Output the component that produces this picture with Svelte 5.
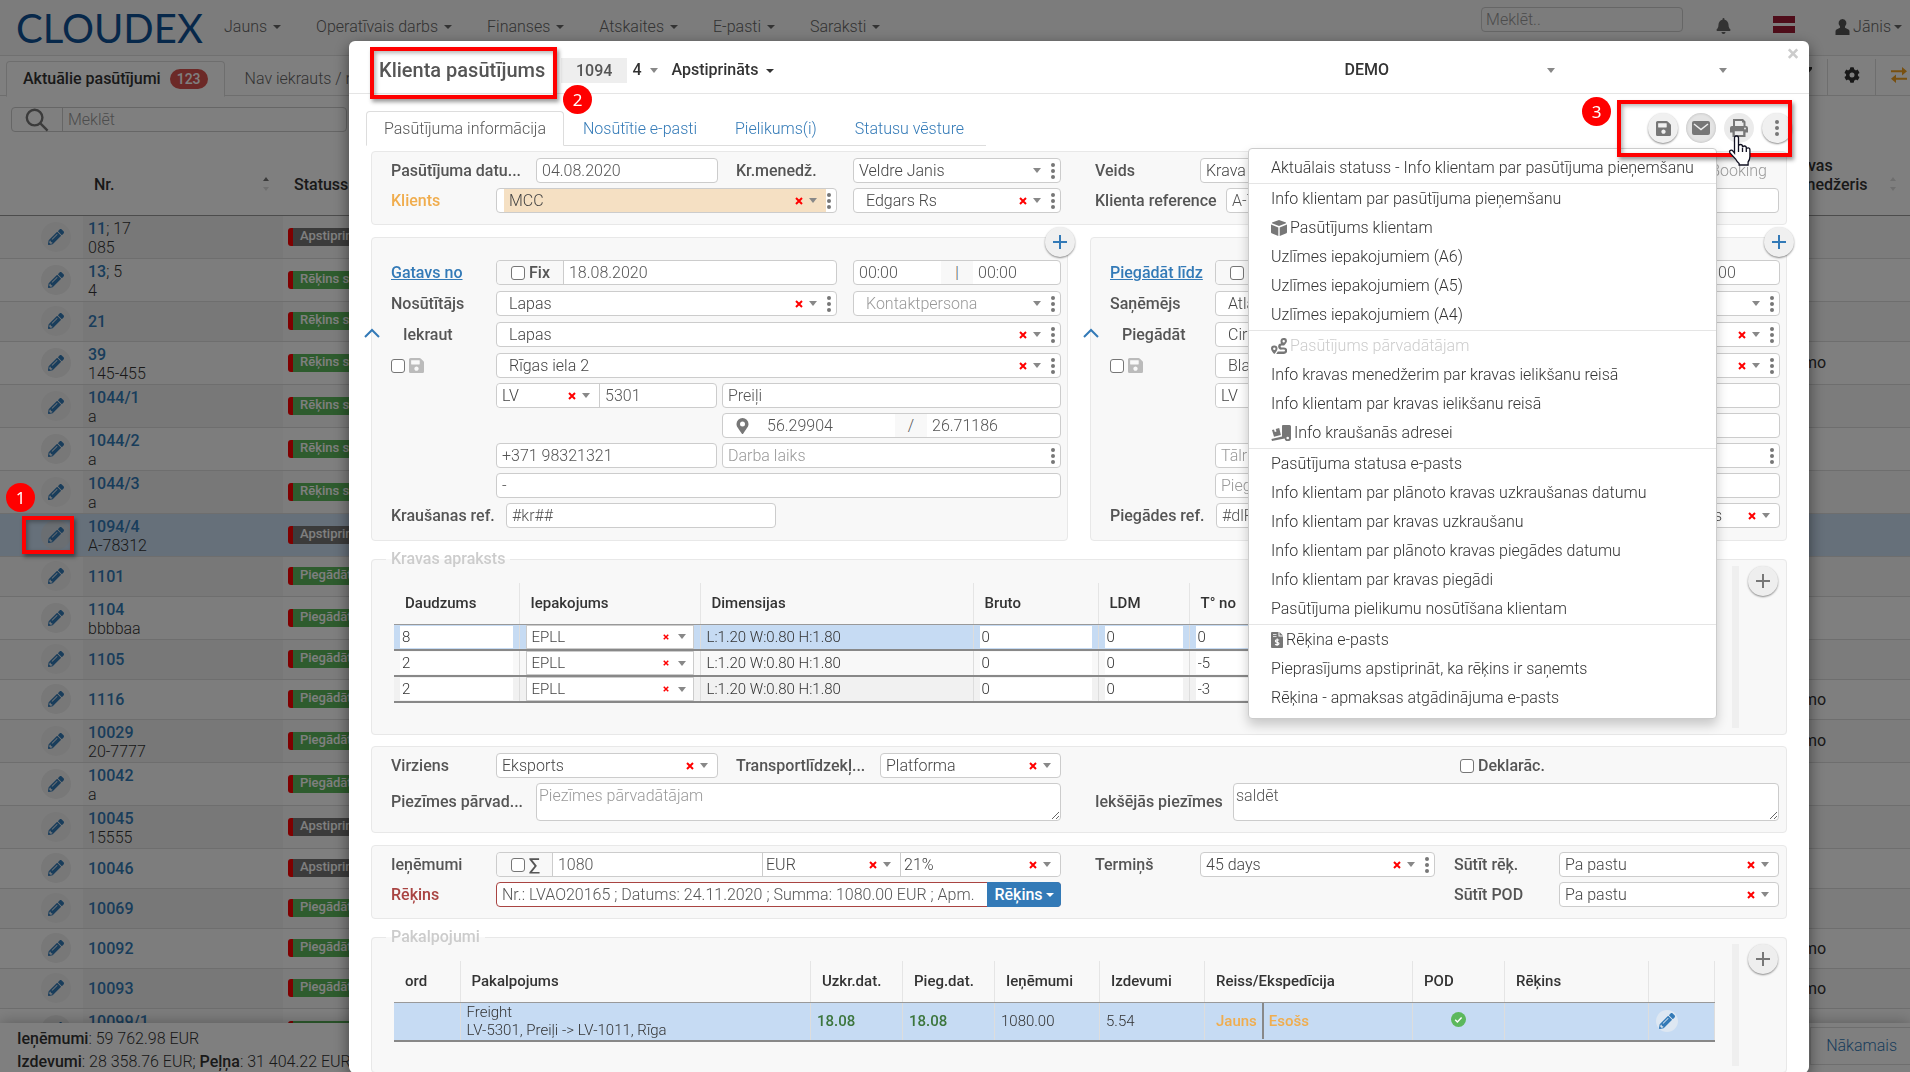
<script>
	const nav = ['Jauns', 'Operatīvais darbs', 'Finanses', 'Atskaites', 'E-pasti', 'Saraksti'];

	const orders = [
		{ nr: '11', extra: '; 17', ref: '085', status: 'Apstiprināts' },
		{ nr: '13', extra: '; 5', ref: '4', status: 'Rēķins saņemts' },
		{ nr: '21', status: 'Rēķins saņemts' },
		{ nr: '39', ref: '145-455', status: 'Rēķins saņemts', manager: 'Demo' },
		{ nr: '1044/1', ref: 'a', status: 'Rēķins saņemts' },
		{ nr: '1044/2', ref: 'a', status: 'Rēķins saņemts' },
		{ nr: '1044/3', ref: 'a', status: 'Rēķins saņemts' },
		{ nr: '1094/4', ref: 'A-78312', status: 'Apstiprināts', selected: true },
		{ nr: '1101', status: 'Piegādāts' },
		{ nr: '1104', ref: 'bbbbaa', status: 'Piegādāts' },
		{ nr: '1105', status: 'Piegādāts' },
		{ nr: '1116', status: 'Piegādāts', manager: 'Demo' },
		{ nr: '10029', ref: '20-7777', status: 'Piegādāts', manager: 'Demo' },
		{ nr: '10042', ref: 'a', status: 'Piegādāts' },
		{ nr: '10045', ref: '15555', status: 'Apstiprināts' },
		{ nr: '10046', status: 'Apstiprināts' },
		{ nr: '10069', status: 'Piegādāts' },
		{ nr: '10092', status: 'Piegādāts', manager: 'Demo' },
		{ nr: '10093', status: 'Piegādāts', manager: 'Demo' },
		{ nr: '10099/1', ref: 'a', status: 'Piegādāts' }
	];

	const stops = [
		{
			id: 'from',
			title: 'Gatavs no',
			party: 'Nosūtītājs',
			place: 'Iekraut',
			date: '18.08.2020',
			company: 'Lapas',
			site: 'Lapas',
			street: 'Rīgas iela 2',
			zip: '5301',
			city: 'Preiļi',
			lat: '56.29904',
			lng: '26.71186',
			phone: '+371 98321321',
			phoneHint: 'Tālrunis',
			note: '-',
			noteHint: '',
			refLabel: 'Kraušanas ref.',
			ref: '#kr##'
		},
		{
			id: 'to',
			title: 'Piegādāt līdz',
			party: 'Saņēmējs',
			place: 'Piegādāt',
			date: '20.08.2020',
			company: 'Atlas',
			site: 'Cirvis',
			street: 'Blaumaņa iela 5',
			zip: '1011',
			city: 'Rīga',
			lat: '56.95020',
			lng: '24.12610',
			phone: '',
			phoneHint: 'Tālrunis',
			note: '',
			noteHint: 'Piegādes piezīmes',
			refLabel: 'Piegādes ref.',
			ref: '#dlR##',
			terms: 'Rīgas noliktavas'
		}
	];

	const cargo = [
		{ count: '8', temp: '0' },
		{ count: '2', temp: '-5' },
		{ count: '2', temp: '-3' }
	];

	const menu = [
		[{ text: 'Aktuālais statuss - Info klientam par pasūtījuma pieņemšanu' }],
		[
			{ text: 'Info klientam par pasūtījuma pieņemšanu' },
			{ text: 'Pasūtījums klientam', icon: 'cube' },
			{ text: 'Uzlīmes iepakojumiem (A6)' },
			{ text: 'Uzlīmes iepakojumiem (A5)' },
			{ text: 'Uzlīmes iepakojumiem (A4)' }
		],
		[
			{ text: 'Pasūtījums pārvadātājam', icon: 'route', disabled: true },
			{ text: 'Info kravas menedžerim par kravas ielikšanu reisā' },
			{ text: 'Info klientam par kravas ielikšanu reisā' },
			{ text: 'Info kraušanās adresei', icon: 'loading' }
		],
		[
			{ text: 'Pasūtījuma statusa e-pasts' },
			{ text: 'Info klientam par plānoto kravas uzkraušanas datumu' },
			{ text: 'Info klientam par kravas uzkraušanu' },
			{ text: 'Info klientam par plānoto kravas piegādes datumu' },
			{ text: 'Info klientam par kravas piegādi' },
			{ text: 'Pasūtījuma pielikumu nosūtīšana klientam' }
		],
		[
			{ text: 'Rēķina e-pasts', icon: 'invoice' },
			{ text: 'Pieprasījums apstiprināt, ka rēķins ir saņemts' },
			{ text: 'Rēķina - apmaksas atgādinājuma e-pasts' }
		]
	];
</script>

{#snippet pencil()}
	<svg class="pencil" viewBox="0 0 512 512" aria-hidden="true">
		<path
			d="M497.9 142.1l-46.1 46.1c-4.7 4.7-12.3 4.7-17 0l-111-111c-4.7-4.7-4.7-12.3 0-17l46.1-46.1c18.7-18.7 49.1-18.7 67.9 0l60.1 60.1c18.8 18.7 18.8 49.1 0 67.9zM284.2 99.8L21.6 362.4.4 483.9c-2.9 16.4 11.4 30.6 27.8 27.8l121.5-21.3 262.6-262.6c4.7-4.7 4.7-12.3 0-17l-111-111c-4.8-4.7-12.4-4.7-17.1 0zM124.1 339.9c-5.5-5.5-5.5-14.3 0-19.8l154-154c5.5-5.5 14.3-5.5 19.8 0s5.5 14.3 0 19.8l-154 154c-5.5 5.5-14.3 5.5-19.8 0zM88 424h48v36.3l-64.5 11.3-31.1-31.1L51.7 376H88v48z"
		/>
	</svg>
{/snippet}

{#snippet disk()}
	<svg class="disk" viewBox="0 32 448 448" aria-hidden="true">
		<path
			d="M433.9 129.9l-83.9-83.9A48 48 0 0 0 316.1 32H48C21.5 32 0 53.5 0 80v352c0 26.5 21.5 48 48 48h352c26.5 0 48-21.5 48-48V163.9a48 48 0 0 0-14.1-34zM224 416c-35.3 0-64-28.7-64-64s28.7-64 64-64 64 28.7 64 64-28.7 64-64 64zm96-304.5V212c0 6.6-5.4 12-12 12H76c-6.6 0-12-5.4-12-12V108c0-6.6 5.4-12 12-12h228.5c3.2 0 6.2 1.3 8.5 3.5l3.5 3.5a12 12 0 0 1 3.5 8.5z"
		/>
	</svg>
{/snippet}

{#snippet dots()}
	<svg class="dots" viewBox="0 0 4 16" aria-hidden="true">
		<circle cx="2" cy="2" r="2" /><circle cx="2" cy="8" r="2" /><circle cx="2" cy="14" r="2" />
	</svg>
{/snippet}

{#snippet plus()}
	<svg class="plus" viewBox="0 0 14 14" aria-hidden="true"><path d="M7 0v14M0 7h14" /></svg>
{/snippet}

{#snippet menuIcon(name)}
	{#if name === 'cube'}
		<svg class="mi" viewBox="0 0 16 16" aria-hidden="true">
			<path d="M8 0l7 2.600v.6L8 6 1 3.200v-.6zM0 4.400l7.300 3V16L.6 13.200Q0 13 0 12.300zM16 4.400l-7.300 3V16l6.700-2.800q.6-.2.6-.9z" />
		</svg>
	{:else if name === 'route'}
		<svg class="mi" viewBox="0 0 16 16" aria-hidden="true">
			<path fill-rule="evenodd" d="M3.300 7.500a3.200 3.200 0 0 1 3.200 3.200c0 1.600-2 4-3.200 5.300C2 14.700 0 12.300 0 10.700a3.200 3.200 0 0 1 3.300-3.200zm0 2.100a1.200 1.200 0 1 0 0 2.400 1.200 1.200 0 0 0 0-2.400zM12.700 0A3 3 0 0 1 16 3c0 1.400-1.700 3.300-2.900 4.500h-2.500a1 1 0 0 0 0 2h2.400a3.200 3.200 0 0 1 0 6.400H5.200l1.600-2.300H13a1 1 0 0 0 0-2h-2.400a3.100 3.100 0 0 1-.6-6.200C9.700 4.600 9.500 3.800 9.500 3a3.200 3.200 0 0 1 3.200-3zm0 2a1.200 1.200 0 1 0 0 2.400 1.200 1.200 0 0 0 0-2.400z" />
		</svg>
	{:else if name === 'loading'}
		<svg class="mi wide" viewBox="0 0 20 16" aria-hidden="true">
			<path fill-rule="evenodd" d="M12 0h6.500Q20 0 20 1.500V12.500a3.200 3.200 0 1 1-6.400 1L1 16l-.6-1.900L11 11.400V1q0-1 1-1zm4.700 11.700a1.300 1.300 0 1 0 0 2.600 1.300 1.300 0 0 0 0-2.600zM1 5l2-.5.8 2.600 1.700-.5L4.700 4l3.500-.9 1.700 6.800L3 11.800z" />
		</svg>
	{:else}
		<svg class="mi narrow" viewBox="0 0 12 16" aria-hidden="true">
			<path fill-rule="evenodd" d="M1 0h6.500v4.500H12V15q0 1-1 1H1q-1 0-1-1V1q0-1 1-1zm1 2v.8h3.500V2zm0 2.200V5h3.500v-.8zM8.500 0L12 3.500H8.500z" />
			<path class="dollar" d="M8 8.300C7.500 7.500 4.400 7.400 4.400 9c0 1.800 3.600.8 3.600 2.600 0 1.600-3.200 1.500-3.800.5M6.200 6.600v7.200" />
		</svg>
	{/if}
{/snippet}

<!-- drop-down with optional clear cross and context dots -->
{#snippet combo(id, value, o = {})}
	<div class="combo {o.class ?? ''}" class:indent={o.indent} class:tint={o.tint}>
		<select {id} aria-label={o.label} class:hint={o.hint}><option>{value}</option></select>
		{#if !o.noClear}
			<button class="clear" aria-label="Notīrīt">
				<svg viewBox="0 0 8 8"><path d="M1 1l6 6M7 1L1 7" /></svg>
			</button>
		{/if}
		<i class="caret"></i>
		{#if o.more}
			<button class="more" aria-label="Vairāk">{@render dots()}</button>
		{/if}
	</div>
{/snippet}

<div class="page">
	<header class="navbar">
		<a class="logo" href="/">CLOUDEX</a>
		<nav>
			{#each nav as item}
				<a href="#{item}">{item}<i class="tri"></i></a>
			{/each}
		</nav>
		<input class="search" type="text" placeholder="Meklēt.." aria-label="Meklēt" />
		<svg class="bell" viewBox="0 0 448 512" aria-hidden="true">
			<path d="M224 512c35.300 0 64-28.700 64-64H160c0 35.300 28.700 64 64 64zm215.400-149.700c-19.300-20.800-55.500-52-55.500-154.300 0-77.700-54.500-139.900-127.900-155.200V32a32 32 0 1 0-64 0v20.800C118.600 68.100 64.100 130.300 64.100 208c0 102.300-36.200 133.500-55.500 154.300A31 31 0 0 0 0 384c.1 16.400 13 32 32.100 32h383.800c19.100 0 32-15.600 32.100-32a31 31 0 0 0-8.600-21.700z" />
		</svg>
		<span class="flag"></span>
		<a class="user" href="#user">
			<svg viewBox="0 0 14 16" aria-hidden="true"><path d="M7 0a4 4.300 0 0 1 2.500 7.600v1.200L13 10.500q1 .6 1 2V16H0v-3.500q0-1.400 1-2l3.500-1.700V7.600A4 4.300 0 0 1 7 0z" /></svg>
			Jānis<i class="tri"></i>
		</a>
	</header>

	<div class="tabbar">
		<a class="tab active" href="#aktualie">Aktuālie pasūtījumi <span class="count">123</span></a>
		<a class="tab" href="#nav">Nav iekrauts / n</a>
		<span class="grow"></span>
		<button class="tool" aria-label="Filtrs">
			<svg viewBox="0 0 16 16"><path d="M0 0h16v2L10 9v7l-4-3V9L0 2z" /></svg>
		</button>
		<button class="tool" aria-label="Iestatījumi">
			<svg viewBox="0 0 512 512"><path d="M487.400 315.700l-42.600-24.600c4.300-23.200 4.300-47 0-70.200l42.600-24.600c4.900-2.800 7.100-8.600 5.500-14-11.100-35.600-30-67.800-54.700-94.600-3.800-4.100-10-5.100-14.800-2.300L380.800 110c-17.900-15.400-38.500-27.300-60.800-35.100V25.800c0-5.600-3.900-10.500-9.400-11.700-36.700-8.200-74.300-7.800-109.200 0-5.500 1.200-9.400 6.100-9.400 11.700V75c-22.200 7.900-42.800 19.800-60.800 35.100L88.700 85.500c-4.900-2.800-11-1.900-14.800 2.300-24.700 26.700-43.600 58.900-54.700 94.600-1.700 5.400.6 11.200 5.500 14L67.300 221c-4.300 23.200-4.300 47 0 70.200l-42.600 24.600c-4.900 2.800-7.100 8.600-5.500 14 11.100 35.600 30 67.800 54.700 94.600 3.800 4.100 10 5.100 14.800 2.300l42.600-24.600c17.900 15.400 38.500 27.300 60.800 35.100v49.200c0 5.600 3.900 10.500 9.400 11.700 36.700 8.200 74.300 7.800 109.200 0 5.500-1.200 9.400-6.100 9.400-11.700v-49.200c22.200-7.900 42.800-19.800 60.800-35.100l42.600 24.600c4.900 2.800 11 1.900 14.800-2.300 24.700-26.700 43.600-58.900 54.700-94.600 1.500-5.500-.7-11.300-5.600-14.100zM256 336a80 80 0 1 1 0-160 80 80 0 0 1 0 160z" /></svg>
		</button>
		<button class="tool swap" aria-label="Mainīt">
			<svg viewBox="0 0 16 16"><path d="M0 3.200h11V0l5 4.300-5 4.200V5.300H0zM16 10.700H5V7.600L0 11.800 5 16v-3.200h11z" /></svg>
		</button>
	</div>

	<div class="finder">
		<label for="find" aria-label="Meklēt">
			<svg viewBox="0 0 20 20"><circle cx="8" cy="8" r="6.500" /><path d="M12.800 12.800l6 6" /></svg>
		</label>
		<input id="find" type="text" placeholder="Meklēt" />
	</div>

	<table class="orders">
		<thead>
			<tr>
				<th class="c-edit"></th>
				<th class="c-nr"><span>Nr.</span><i class="sort asc"></i></th>
				<th class="c-status">Statuss</th>
				<th></th>
				<th class="c-man"><span>Kravas menedžeris</span><i class="sort"></i></th>
			</tr>
		</thead>
		<tbody>
			{#each orders as o}
				<tr class:double={o.ref} class:selected={o.selected}>
					<td><button class="edit" aria-label="Labot {o.nr}">{@render pencil()}</button></td>
					<td class="nr"><b>{o.nr}</b>{o.extra ?? ''}{#if o.ref}<br />{o.ref}{/if}</td>
					<td><span class="badge" class:dark={o.status === 'Apstiprināts'}>{o.status}</span></td>
					<td></td>
					<td class="man">{o.manager ?? ''}</td>
				</tr>
			{/each}
		</tbody>
	</table>

	<footer class="totals">
		<div>
			<p><b>Ieņēmumi</b>: 59 762.98 EUR</p>
			<p><b>Izdevumi</b>: 28 358.76 EUR; <b>Peļņa</b>: 31 404.22 EUR</p>
		</div>
		<a class="next" href="#next">Nākamais</a>
	</footer>
</div>

<div class="backdrop">
	<section class="modal">
		<header class="head">
			<h1>Klienta pasūtījums</h1>
			<span class="order-no">1094</span>
			<b class="sub">4</b><i class="caret"></i>
			<button class="state">Apstiprināts<i class="tri"></i></button>
			<span class="demo">DEMO</span>
			<i class="caret"></i>
			<i class="caret far"></i>
			<button class="close" aria-label="Aizvērt">×</button>
			<span class="mark mark-title"></span>
			<span class="step step-title">2</span>
		</header>

		<div class="body">
			<div class="tabs">
				<a class="on" href="#info">Pasūtījuma informācija</a>
				<a href="#mail">Nosūtītie e-pasti</a>
				<a href="#files">Pielikums(i)</a>
				<a href="#history">Statusu vēsture</a>
			</div>
			<div class="actions">
				<button class="round" aria-label="Saglabāt">{@render disk()}</button>
				<button class="round pressed" aria-label="E-pasts">
					<svg class="mail" viewBox="0 0 18 14"><rect width="18" height="14" rx="2" /><path d="M2 3l7 5.500L16 3" /></svg>
				</button>
				<button class="round flat" aria-label="Drukāt">
					<svg class="print" viewBox="0 0 18 18">
						<path fill-rule="evenodd" d="M3 0h10l2.500 2.500V7H16q2 0 2 2v4.500h-2.500V18h-13v-4.500H0V9q0-2 2-2h1zm2 2v5h8.500V3.500H12V2zm-.2 10.200V16h8.400v-3.800zM15 8.600a.9.9 0 1 0 0 1.800.9.9 0 0 0 0-1.800z" />
					</svg>
				</button>
				<button class="round" aria-label="Vairāk">{@render dots()}</button>
				<span class="mark mark-actions"></span>
				<span class="step step-actions">3</span>
			</div>

			<div class="panel halves">
				<div class="rows">
					<div class="row">
						<label class="w-long" for="odate">Pasūtījuma datu...</label>
						<input id="odate" class="field" value="04.08.2020" />
						<label class="w-mid" for="mgr">Kr.menedž.</label>
						{@render combo('mgr', 'Veldre Janis', { more: true, noClear: true, class: 'side' })}
					</div>
					<div class="row">
						<label class="orange" for="client">Klients</label>
						{@render combo('client', 'MCC', { more: true, indent: true, tint: true })}
						{@render combo('contact', 'Edgars Rs', { more: true, indent: true, class: 'side apart', label: 'Kontakts' })}
					</div>
				</div>
				<div class="rows">
					<div class="row">
						<label for="kind">Veids</label>
						{@render combo('kind', 'Krava', {})}
						<span class="booking">Booking</span>
					</div>
					<div class="row">
						<label class="w-ref" for="cref">Klienta reference</label>
						<input id="cref" class="field" value="A-78312" />
					</div>
				</div>
			</div>

			<div class="pair">
				{#each stops as s}
					<div class="panel stop">
						<button class="round add" aria-label="Pievienot">{@render plus()}</button>
						<div class="rows loose">
							<div class="row">
								<a class="label" href="#{s.id}">{s.title}</a>
								<div class="group">
									<label class="addon fix"><input type="checkbox" /> Fix</label>
									<input value={s.date} aria-label={s.title} />
								</div>
								<div class="group side apart">
									<input value="00:00" aria-label="Laiks no" />
									<span class="sep">|</span>
									<input value="00:00" aria-label="Laiks līdz" />
								</div>
							</div>
							<div class="row">
								<label for="{s.id}-party">{s.party}</label>
								{@render combo(s.id + '-party', s.company, { more: true, indent: true })}
								{@render combo(s.id + '-person', 'Kontaktpersona', { more: true, indent: true, noClear: true, hint: true, class: 'side apart', label: 'Kontaktpersona' })}
							</div>
							<div class="row">
								<label class="inset" for="{s.id}-site">
									<svg class="chev" viewBox="0 0 16 10"><path d="M1 9l7-7 7 7" /></svg>{s.place}
								</label>
								{@render combo(s.id + '-site', s.site, { more: true, indent: true })}
							</div>
							<div class="row">
								<span class="label keep"><input type="checkbox" aria-label="Saglabāt adresi" />{@render disk()}</span>
								{@render combo(s.id + '-street', s.street, { more: true, indent: true, label: 'Iela' })}
							</div>
						</div>
						<div class="rows lower">
							<div class="row">
								<span class="label"></span>
								<div class="group narrow">
									{@render combo(s.id + '-cc', 'LV', { label: 'Valsts', class: 'country' })}
									<input value={s.zip} aria-label="Pasta indekss" />
								</div>
								<input class="field" value={s.city} aria-label="Pilsēta" />
							</div>
							<div class="row">
								<span class="label"></span>
								<span class="narrow"></span>
								<div class="group">
									<svg class="pin" viewBox="0 0 384 512" aria-hidden="true"><path fill-rule="evenodd" d="M172.300 501.700C27 291 0 269.400 0 192a192 192 0 1 1 384 0c0 77.400-27 99-172.300 309.700a24 24 0 0 1-39.400 0zM192 272a80 80 0 1 0 0-160 80 80 0 0 0 0 160z" /></svg>
									<input value={s.lat} aria-label="Platums" />
									<span class="sep">/</span>
									<input value={s.lng} aria-label="Garums" />
								</div>
							</div>
							<div class="row">
								<span class="label"></span>
								<input class="field narrow" value={s.phone} placeholder={s.phoneHint} aria-label="Tālrunis" />
								<div class="group">
									<input placeholder="Darba laiks" aria-label="Darba laiks" />
									<button class="more" aria-label="Vairāk">{@render dots()}</button>
								</div>
							</div>
							<div class="row">
								<span class="label"></span>
								<input class="field" value={s.note} placeholder={s.noteHint} aria-label="Piezīmes" />
							</div>
							<div class="row">
								<label class="w-stop" class:short={s.terms} for="{s.id}-ref">{s.refLabel}</label>
								<input id="{s.id}-ref" class="field ref" value={s.ref} />
								{#if s.terms}
									{@render combo(s.id + '-terms', s.terms, { label: 'Noteikumi', class: 'terms' })}
								{/if}
							</div>
						</div>
					</div>
				{/each}
			</div>

			<fieldset>
				<legend>Kravas apraksts</legend>
				<div class="sheet cargo-sheet">
					<table class="grid cargo">
						<thead>
							<tr>
								<th class="k1">Daudzums</th>
								<th class="k2">Iepakojums</th>
								<th class="k3">Dimensijas</th>
								<th class="k4">Bruto</th>
								<th class="k5">LDM</th>
								<th class="k6">T° no</th>
								<th></th>
							</tr>
						</thead>
						<tbody>
							{#each cargo as c, i}
								<tr class:sel={i === 0}>
									<td><input value={c.count} aria-label="Daudzums" /></td>
									<td>{@render combo('pack-' + i, 'EPLL', { label: 'Iepakojums', class: 'cell' })}</td>
									<td class="dim">L:1.20 W:0.80 H:1.80</td>
									<td><input value="0" aria-label="Bruto" /></td>
									<td><input value="0" aria-label="LDM" /></td>
									<td><input value={c.temp} aria-label="T° no" /></td>
									<td></td>
								</tr>
							{/each}
						</tbody>
					</table>
					<span class="strip"></span>
					<button class="round grey" aria-label="Pievienot kravu">{@render plus()}</button>
				</div>
			</fieldset>

			<div class="panel halves">
				<div class="rows">
					<div class="row">
						<label for="dir">Virziens</label>
						{@render combo('dir', 'Eksports', {})}
						<label class="w-trans" for="trans">Transportlīdzekļ...</label>
						{@render combo('trans', 'Platforma', { class: 'trans' })}
					</div>
					<div class="row tall">
						<label class="w-long" for="cnote">Piezīmes pārvad...</label>
						<textarea id="cnote" placeholder="Piezīmes pārvadātājam"></textarea>
					</div>
				</div>
				<div class="rows">
					<div class="row">
						<span class="spring"></span>
						<label class="decl"><input type="checkbox" />Deklarāc.</label>
					</div>
					<div class="row tall">
						<label class="w-note" for="inote">Iekšējās piezīmes</label>
						<textarea id="inote">saldēt</textarea>
					</div>
				</div>
			</div>

			<div class="panel halves">
				<div class="rows">
					<div class="row">
						<label for="income">Ieņēmumi</label>
						<div class="group">
							<label class="addon sum"><input type="checkbox" />∑</label>
							<input id="income" value="1080" />
							{@render combo('cur', 'EUR', { label: 'Valūta', class: 'money' })}
							{@render combo('vat', '21%', { label: 'PVN', class: 'money' })}
						</div>
					</div>
					<div class="row">
						<label class="red" for="inv">Rēķins</label>
						<div class="group invoice">
							<input id="inv" value="Nr.: LVAO20165 ; Datums: 24.11.2020 ; Summa: 1080.00 EUR ; Apm." />
							<button>Rēķins<i class="tri"></i></button>
						</div>
					</div>
				</div>
				<div class="rows">
					<div class="row">
						<label for="term">Termiņš</label>
						{@render combo('term', '45 days', { more: true })}
						<label class="w-send" for="send">Sūtīt rēķ.</label>
						{@render combo('send', 'Pa pastu', { class: 'send' })}
					</div>
					<div class="row">
						<span class="spring"></span>
						<label class="w-send" for="pod">Sūtīt POD</label>
						{@render combo('pod', 'Pa pastu', { class: 'send' })}
					</div>
				</div>
			</div>

			<fieldset>
				<legend>Pakalpojumi</legend>
				<div class="sheet">
					<table class="grid services">
						<thead>
							<tr>
								<th class="s1">ord</th>
								<th class="s2">Pakalpojums</th>
								<th class="s3">Uzkr.dat.</th>
								<th class="s3">Pieg.dat.</th>
								<th class="s4">Ieņēmumi</th>
								<th class="s4">Izdevumi</th>
								<th class="s5">Reiss/Ekspedīcija</th>
								<th class="s3">POD</th>
								<th class="s6">Rēķins</th>
								<th class="s7"></th>
							</tr>
						</thead>
						<tbody>
							<tr class="sel">
								<td></td>
								<td>Freight<br />LV-5301, Preiļi -> LV-1011, Rīga</td>
								<td class="green">18.08</td>
								<td class="green">18.08</td>
								<td>1080.00</td>
								<td>5.54</td>
								<td class="trip"><a href="#new">Jauns</a><a href="#existing">Esošs</a></td>
								<td class="mid">
									<svg class="ok" viewBox="0 0 16 16"><circle cx="8" cy="8" r="8" /><path d="M4.500 8.300l2.300 2.300 4.500-4.800" /></svg>
								</td>
								<td></td>
								<td><button class="edit small" aria-label="Labot">{@render pencil()}</button></td>
							</tr>
						</tbody>
					</table>
					<span class="strip"></span>
					<button class="round grey" aria-label="Pievienot pakalpojumu">{@render plus()}</button>
				</div>
			</fieldset>
		</div>

		<div class="menu">
			{#each menu as part}
				<div class="part">
					{#each part as m}
						<button class:off={m.disabled}>{#if m.icon}{@render menuIcon(m.icon)}{/if}{m.text}</button>
					{/each}
				</div>
			{/each}
		</div>
		<svg class="hand" viewBox="0 0 24 32" aria-hidden="true">
			<path d="M6.500 18V3q0-2 2-2t2 2v8q0-1.500 2-1.500t2 2v1q0-1.500 1.900-1.500t1.900 2v1q0-1.200 1.800-1.200t1.800 2v6.700q0 3-1.800 5.500V30h-9v-1.500q-2-1.500-3.500-4.500L2 18q-1-2 .5-2.700 1.500-.6 2.700 1z" />
			<path d="M10.500 11v6M14.500 13v4M18.300 14v3" />
		</svg>
	</section>
</div>

<span class="mark mark-row"></span>
<span class="step step-row">1</span>

<style>
	:global(body) {
		background: #fff;
		overflow: hidden;
		font: 300 16px/20px Roboto, 'Liberation Sans', sans-serif;
		color: #333;
	}

	:global(#app) * {
		box-sizing: border-box;
	}

	a {
		color: #337ab7;
		text-decoration: none;
	}

	b {
		font-weight: 500;
	}

	button,
	input,
	select,
	textarea {
		margin: 0;
		padding: 0;
		border: 0;
		background: none;
		font: inherit;
		color: inherit;
		outline: none;
		min-width: 0;
	}

	input::placeholder,
	textarea::placeholder {
		color: #999;
		opacity: 1;
	}

	input[type='checkbox'] {
		appearance: none;
		flex: none;
		width: 14px;
		height: 14px;
		border: 1px solid #767676;
		border-radius: 3px;
		background: #fff;
	}

	.tri,
	.caret {
		flex: none;
		display: inline-block;
		border: 4px solid transparent;
		border-top-color: currentColor;
		border-bottom: 0;
		vertical-align: middle;
	}

	.tri {
		margin-left: 6px;
	}

	.caret {
		border-top: 5px solid #888;
	}

	/* page under the dialog */
	.page {
		height: 100vh;
		overflow: hidden;
		position: relative;
	}

	.navbar {
		display: flex;
		align-items: center;
		height: 56px;
		padding: 0 8px 0 16px;
		background: #f8f8f8;
		border-bottom: 1px solid #e0e0e0;
	}

	.logo {
		width: 208px;
		font: 400 40px/56px Lato, sans-serif;
		color: #0f5095;
	}

	nav {
		display: flex;
		gap: 35px;
		flex: 1;
		padding-bottom: 2px;
	}

	nav a,
	.user {
		color: #666;
		white-space: nowrap;
	}

	.search {
		width: 202px;
		height: 25px;
		margin-bottom: 16px;
		padding: 0 4px;
		border: 1px solid #ccc;
		border-radius: 4px;
	}

	.bell {
		width: 15px;
		height: 16px;
		margin: 0 34px 4px 33px;
		fill: #666;
	}

	.flag {
		width: 22px;
		height: 17px;
		margin: 0 40px 6px 8px;
		background: linear-gradient(#9e1b34 40%, #fff 40%, #fff 60%, #9e1b34 60%);
	}

	.user {
		display: flex;
		align-items: center;
		gap: 3px;
		padding-bottom: 2px;
	}

	.user svg {
		width: 15px;
		height: 16px;
		fill: #555;
	}

	.user .tri {
		margin-left: 0;
	}

	.tabbar {
		display: flex;
		height: 40px;
		padding: 5px 0 0 6px;
		border-bottom: 1px solid #ddd;
	}

	.tab {
		display: flex;
		align-items: center;
		height: 36px;
		padding: 0 16px 0 20px;
		color: #666;
	}

	.tab.active {
		border: 1px solid #ddd;
		border-bottom-color: #fff;
		border-radius: 4px 4px 0 0;
		padding-left: 16px;
		background: #fff;
		color: #333;
		font-weight: 500;
	}

	.count {
		margin-left: 9px;
		padding: 0 7px;
		border-radius: 10px;
		background: #d9534f;
		color: #fff;
		font-size: 14px;
	}

	.grow,
	.spring {
		flex: 1;
	}

	.tool {
		width: 48px;
		height: 36px;
		margin-top: -2px;
		border-right: 1px solid #ddd;
	}

	.tool svg {
		width: 16px;
		height: 16px;
		fill: #333;
	}

	.tool.swap {
		width: 34px;
		padding-left: 11px;
		border: 0;
	}

	.tool.swap svg {
		fill: #f0a020;
	}

	.finder {
		display: flex;
		width: 336px;
		height: 25px;
		margin: 11px 0 0 11px;
		border: 1px solid #ccc;
		border-radius: 4px;
	}

	.finder label {
		display: flex;
		justify-content: center;
		width: 51px;
		border-right: 1px solid #ccc;
	}

	.finder svg {
		width: 24px;
		height: 24px;
		fill: none;
		stroke: #777;
		stroke-width: 2;
	}

	.finder input {
		flex: 1;
		padding: 0 5px;
	}

	.orders {
		width: 100%;
		table-layout: fixed;
		border-collapse: collapse;
	}

	.orders th {
		position: relative;
		height: 83px;
		padding: 23px 10px 0 11px;
		border-bottom: 1px solid #999;
		text-align: left;
		font-weight: 500;
		line-height: 19px;
	}

	.c-edit {
		width: 83px;
	}

	.c-nr {
		width: 200px;
	}

	.c-status {
		width: 130px;
	}

	.orders .c-man {
		width: 131px;
		padding: 4px 30px 0 5px;
	}

	.sort {
		position: absolute;
		right: 14px;
		top: 55px;
		border: 3px solid transparent;
		border-top: 4px solid #ddd;
		border-bottom: 0;
	}

	.sort::before {
		content: '';
		position: absolute;
		left: -3px;
		top: -14px;
		border: 3px solid transparent;
		border-bottom: 4px solid #ddd;
		border-top: 0;
	}

	.asc::before {
		border-bottom-color: #777;
	}

	.orders td {
		height: 40px;
		padding: 0 5px;
		border-bottom: 1px solid #ddd;
		line-height: 19px;
	}

	.orders .double td {
		height: 43px;
	}

	.orders .double .nr {
		padding-top: 2px;
	}

	.orders tbody tr:nth-child(odd) {
		background: #f9f9f9;
	}

	.orders .nr {
		background: #fafafa;
	}

	.orders tr:nth-child(odd) .nr {
		background: #f1f1f1;
	}

	.orders tbody tr.selected,
	.orders .selected .nr {
		background: #cce0f5;
	}

	.nr b {
		color: #337ab7;
	}

	.orders .man {
		padding-right: 0;
		font-weight: 400;
	}

	.edit {
		display: grid;
		place-items: center;
		width: 30px;
		height: 30px;
		margin-left: 36px;
		border-radius: 50%;
		background: #f0f0f0;
	}

	.selected .edit {
		background: #d4dce4;
	}

	.edit.small {
		width: 22px;
		height: 22px;
		margin-left: 1px;
		background: #dde7f2;
	}

	.pencil {
		width: 16px;
		height: 16px;
		fill: #337ab7;
	}

	.badge {
		display: block;
		height: 18px;
		padding-left: 7px;
		border-left: 5px solid #f00;
		border-radius: 3px;
		background: #5cb85c;
		color: #fff;
		font: 500 13px/16px Roboto, sans-serif;
	}

	.badge.dark {
		background: #777;
	}

	.totals {
		position: absolute;
		inset: auto 0 0;
		display: flex;
		justify-content: space-between;
		height: 49px;
		padding: 4px 0 0 17px;
		background: #fff;
		box-shadow: 0 0 16px rgba(0, 0, 0, 0.3);
	}

	.totals p {
		margin: 0;
		line-height: 23px;
	}

	.next {
		height: 38px;
		padding: 0 13px 0 15px;
		border: 1px solid #ddd;
		border-right: 0;
		line-height: 36px;
	}

	/* dialog */
	.backdrop {
		position: fixed;
		inset: 0;
		overflow: hidden;
		background: rgba(0, 0, 0, 0.5);
	}

	.modal {
		position: relative;
		margin: 41px 101px 0 349px;
		border-radius: 6px;
		background: #fff;
		box-shadow: 0 5px 15px rgba(0, 0, 0, 0.5);
	}

	.head {
		position: relative;
		display: flex;
		align-items: center;
		height: 53px;
		padding: 6px 82px 0 30px;
		border-bottom: 1px solid #e5e5e5;
		font-weight: 500;
	}

	h1 {
		width: 182px;
		margin: 0;
		font: 500 20px/26px Roboto, sans-serif;
		color: #555;
		white-space: nowrap;
	}

	.order-no {
		padding: 2px 15px;
		background: #eee;
		color: #555;
		line-height: 21px;
	}

	.sub {
		margin: 0 9px 0 5px;
	}

	.state {
		margin-left: 13px;
	}

	.state .tri {
		margin-left: 8px;
	}

	.demo {
		margin-left: auto;
		margin-right: 158px;
	}

	.far {
		margin-left: 164px;
	}

	.close {
		position: absolute;
		right: 10px;
		top: 3px;
		color: #ccc;
		font: 700 22px/20px Roboto, sans-serif;
	}

	.body {
		position: relative;
		padding: 17px 22px 0;
	}

	.tabs {
		display: flex;
		width: 620px;
		height: 35px;
		margin: 0 0 5px -5px;
		border-bottom: 1px solid #ddd;
	}

	.tabs a {
		padding: 0 19px;
		line-height: 36px;
		white-space: nowrap;
	}

	.tabs .on {
		height: 35px;
		padding: 0 17px;
		border: 1px solid #ddd;
		border-bottom-color: #fff;
		border-radius: 4px 4px 0 0;
		background: #fff;
		color: #555;
		line-height: 34px;
	}

	.actions {
		position: absolute;
		right: 17px;
		top: 19px;
		display: flex;
		gap: 8px;
	}

	.round {
		display: grid;
		place-items: center;
		flex: none;
		width: 30px;
		height: 30px;
		border-radius: 50%;
		background: #f0f0f0;
		box-shadow: 0 1px 2px rgba(0, 0, 0, 0.45);
		fill: #777;
		color: #777;
	}

	.pressed {
		background: #e4e4e4;
		box-shadow: inset 0 0 3px rgba(0, 0, 0, 0.2);
	}

	.flat {
		background: #ebebeb;
		box-shadow: none;
	}

	.disk {
		width: 15px;
		height: 15px;
	}

	.mail {
		width: 18px;
		height: 14px;
	}

	.mail path {
		fill: none;
		stroke: #eee;
		stroke-width: 1.5;
	}

	.print {
		width: 18px;
		height: 18px;
	}

	.dots {
		width: 4px;
		height: 16px;
		fill: #777;
	}

	.plus {
		width: 14px;
		height: 14px;
		stroke: currentColor;
		stroke-width: 2;
	}

	.panel {
		position: relative;
		margin-bottom: 12px;
		padding: 6px 7px 11px 19px;
		border: 1px solid #e8e8e8;
		border-radius: 4px;
		background: #f8f8f8;
	}

	.halves {
		display: grid;
		grid-template-columns: minmax(0, 670fr) minmax(0, 684fr);
		gap: 34px;
	}

	.pair {
		display: grid;
		grid-template-columns: minmax(0, 1fr) minmax(0, 1fr);
		gap: 22px;
	}

	.stop {
		padding: 22px 6px 12px 19px;
	}

	.rows {
		display: grid;
		grid-template-columns: minmax(0, 1fr);
		align-content: start;
		gap: 5px;
	}

	.loose {
		gap: 6px;
	}

	.lower {
		margin-top: 5px;
	}

	.row {
		position: relative;
		display: flex;
		align-items: center;
		height: 25px;
	}

	.row.tall {
		height: 38px;
	}

	.row > label,
	.label {
		flex: none;
		width: 105px;
		color: #555;
		font-weight: 500;
		white-space: nowrap;
	}

	.row > .w-long {
		width: 145px;
	}

	.row > .w-mid {
		width: 135px;
		padding-left: 18px;
	}

	.row > .w-ref {
		width: 131px;
	}

	.row > .w-stop {
		width: 115px;
	}

	.row > .short {
		width: 106px;
	}

	.row > .w-trans {
		width: 162px;
		padding-left: 18px;
	}

	.row > .w-note {
		width: 138px;
	}

	.row > .w-send {
		width: 124px;
		padding-left: 19px;
	}

	.row > .orange {
		color: #f0ad4e;
	}

	.row > .red {
		color: #a94442;
	}

	a.label {
		color: #337ab7;
		text-decoration: underline;
	}

	.row > .inset {
		padding-left: 12px;
	}

	.chev {
		position: absolute;
		left: -27px;
		top: 6px;
		width: 16px;
		height: 10px;
		fill: none;
		stroke: #337ab7;
		stroke-width: 2;
	}

	.keep {
		display: flex;
		align-items: center;
		gap: 4px;
	}

	.keep .disk {
		fill: #bbb;
	}

	.field,
	.group,
	.combo,
	textarea {
		flex: 1 1 0;
		height: 25px;
		border: 1px solid #ccc;
		border-radius: 4px;
		background: #fff;
		color: #555;
	}

	.field {
		padding: 0 5px;
	}

	.group,
	.combo {
		display: flex;
		align-items: center;
		min-width: 0;
	}

	.combo {
		gap: 6px;
		padding: 0 9px 0 5px;
		color: #444;
	}

	.combo:has(.more) {
		padding-right: 5px;
	}

	.combo select {
		flex: 1;
		height: 23px;
		appearance: none;
	}

	.combo .hint {
		color: #999;
	}

	.combo.indent {
		padding-left: 12px;
	}

	.combo.tint {
		background: linear-gradient(#f5e0c3, #f5e0c3) 7px 0 / calc(100% - 17px) 100% no-repeat #fff;
	}

	.clear {
		display: grid;
		place-items: center;
		width: 8px;
		height: 20px;
	}

	.clear svg {
		width: 8px;
		height: 8px;
		stroke: #f00;
		stroke-width: 2;
	}

	.more {
		display: grid;
		place-items: center;
		width: 4px;
		height: 20px;
		margin-left: 4px;
	}

	.row > .side {
		flex: none;
		width: 208px;
	}

	.row > .apart {
		margin-left: 16px;
	}

	.booking {
		width: 180px;
		padding-right: 12px;
		text-align: right;
		color: #999;
	}

	.group > input:not([type]) {
		flex: 1 1 0;
		padding: 0 5px;
	}

	.group > .more {
		margin: 0 5px;
	}

	.addon {
		display: flex;
		align-items: center;
		gap: 4px;
		height: 23px;
		padding: 0 13px 0 14px;
		border-right: 1px solid #ccc;
		border-radius: 4px 0 0 4px;
		background: #f8f8f8;
		color: #555;
		font-weight: 500;
	}

	.sep {
		width: 32px;
		height: 23px;
		background: #f8f8f8;
		text-align: center;
		line-height: 23px;
	}

	.row > .narrow {
		flex: none;
		width: 221px;
		margin-right: 5px;
	}

	.group > .country {
		flex: none;
		width: 103px;
		height: 23px;
		border-width: 0 1px 0 0;
		border-radius: 4px 0 0 4px;
	}

	.pin {
		width: 13px;
		height: 16px;
		margin: 0 13px;
		fill: #777;
	}

	.row > .ref {
		flex: none;
		width: 270px;
	}

	.row > .terms {
		margin-left: 16px;
	}

	.terms select {
		padding-right: 20px;
		text-align-last: right;
	}

	.row > .trans {
		flex: none;
		width: 181px;
	}

	.row > .send {
		flex: none;
		width: 220px;
	}

	textarea {
		height: 38px;
		padding: 1px 2px;
		line-height: 22px;
		resize: vertical;
	}

	.row > .decl {
		display: flex;
		align-items: center;
		gap: 4px;
		width: 319px;
	}

	.sum {
		padding: 0 12px 0 14px;
		font-size: 18px;
	}

	.group > .money {
		flex: none;
		width: 138px;
		height: 23px;
		border-width: 0 0 0 1px;
		border-radius: 0;
		padding-left: 3px;
	}

	.group > .money:last-child {
		width: 160px;
		border-radius: 0 4px 4px 0;
	}

	.group.invoice {
		border-color: #a94442;
	}

	.invoice button {
		width: 74px;
		height: 25px;
		margin-right: -1px;
		border-radius: 0 4px 4px 0;
		background: #337ab7;
		color: #fff;
		font-weight: 500;
	}

	.invoice .tri {
		margin-left: 3px;
	}

	.add {
		position: absolute;
		right: -8px;
		top: -11px;
		color: #337ab7;
	}

	/* boxed tables */
	fieldset {
		min-width: 0;
		margin: -1px 0 11px;
		padding: 0 0 6px 14px;
		border: 1px solid #e8e8e8;
		border-radius: 4px;
		background: #f8f8f8;
	}

	legend {
		padding: 0 5px;
		color: #ccc;
		font-weight: 500;
		line-height: 14px;
	}

	.sheet {
		display: flex;
		align-items: stretch;
		padding-left: 8px;
		min-height: 122px;
	}

	.cargo-sheet {
		min-height: 162px;
	}

	.strip {
		width: 7px;
		margin: 0 9px 0 17px;
		background: #efefef;
	}

	.grey {
		margin-right: 8px;
		background: #eee;
	}

	.grid {
		flex: 1;
		align-self: flex-start;
		min-width: 0;
		margin-top: 17px;
		table-layout: fixed;
		border-collapse: collapse;
		font-size: 15px;
		line-height: 18px;
	}

	.grid th {
		height: 41px;
		padding: 0 11px;
		border-right: 1px solid #e5e5e5;
		border-bottom: 1px solid #999;
		text-align: left;
		font-weight: 500;
	}

	.grid td {
		height: 26px;
		padding: 0 6px;
		border-right: 1px solid #ddd;
		border-bottom: 2px solid #888;
	}

	.grid tr:nth-child(3) {
		background: #f1f1f1;
	}

	.grid .sel {
		background: #c6dbf3;
	}

	.grid td input {
		width: 100%;
		height: 22px;
		padding: 0 2px;
		background: #fff;
		vertical-align: top;
	}

	.combo.cell {
		height: 24px;
		border-radius: 0;
		gap: 8px;
		padding-right: 7px;
	}

	.cell select {
		height: 22px;
	}

	.cell .clear svg {
		width: 6px;
		height: 6px;
	}

	.k1 {
		width: 125px;
	}

	.k2 {
		width: 181px;
	}

	.k3 {
		width: 273px;
	}

	.k4 {
		width: 125px;
	}

	.k5 {
		width: 91px;
	}

	.k6 {
		width: 125px;
	}

	.services td {
		height: 39px;
	}

	.s1 {
		width: 66px;
	}

	.s3 {
		width: 92px;
	}

	.s4 {
		width: 105px;
	}

	.s5 {
		width: 208px;
	}

	.s6 {
		width: 144px;
	}

	.s7 {
		width: 66px;
	}

	.green {
		color: #3c763d;
		font-weight: 500;
	}

	.trip a {
		padding: 9px 5px;
		color: #f0ad4e;
		font-weight: 500;
	}

	.trip a + a {
		border-left: 2px solid #888;
	}

	.mid {
		text-align: center;
	}

	.ok {
		width: 15px;
		height: 15px;
		fill: #5cb85c;
	}

	.ok path {
		fill: none;
		stroke: #fff;
		stroke-width: 1.5;
	}

	/* e-mail menu */
	.menu {
		position: absolute;
		right: 92px;
		top: 107px;
		width: 469px;
		padding: 4px 0 5px;
		border: 1px solid #ccc;
		border-radius: 4px;
		background: #fff;
		box-shadow: 0 6px 12px rgba(0, 0, 0, 0.2);
	}

	.part {
		padding-bottom: 1px;
	}

	.part + .part {
		border-top: 1px solid #e5e5e5;
	}

	.menu button {
		display: flex;
		align-items: center;
		gap: 3px;
		width: 100%;
		height: 29px;
		padding: 0 22px;
		white-space: nowrap;
		color: #333;
	}

	.menu .off {
		color: #ccc;
	}

	.mi {
		width: 16px;
		height: 16px;
		fill: #777;
	}

	.mi.wide {
		width: 20px;
	}

	.mi.narrow {
		width: 12px;
	}

	.dollar {
		fill: none;
		stroke: #fff;
		stroke-width: 1.2;
	}

	.hand {
		position: absolute;
		right: 57px;
		top: 94px;
		width: 24px;
		height: 32px;
		fill: #fff;
		stroke: #112;
		stroke-width: 1.3;
		z-index: 3;
	}

	/* numbered call-outs */
	.mark {
		position: absolute;
		border: 4px solid #f00;
		box-shadow: 2px 3px 4px rgba(0, 0, 0, 0.4), inset 2px 2px 4px rgba(0, 0, 0, 0.3);
		pointer-events: none;
		z-index: 2;
	}

	.step {
		position: absolute;
		display: grid;
		place-items: center;
		width: 29px;
		height: 29px;
		border-radius: 50%;
		background: #f00;
		color: #fff;
		font: 400 17px/29px 'Noto Sans', sans-serif;
		z-index: 2;
	}

	.mark-title {
		left: 21px;
		top: 6px;
		width: 187px;
		height: 52px;
	}

	.step-title {
		left: 214px;
		top: 44px;
	}

	.mark-actions {
		right: 0;
		top: -13px;
		width: 175px;
		height: 57px;
	}

	.step-actions {
		right: 181px;
		top: -16px;
	}

	.mark-row {
		left: 22px;
		top: 516px;
		width: 52px;
		height: 38px;
	}

	.step-row {
		left: 6px;
		top: 483px;
	}
</style>
